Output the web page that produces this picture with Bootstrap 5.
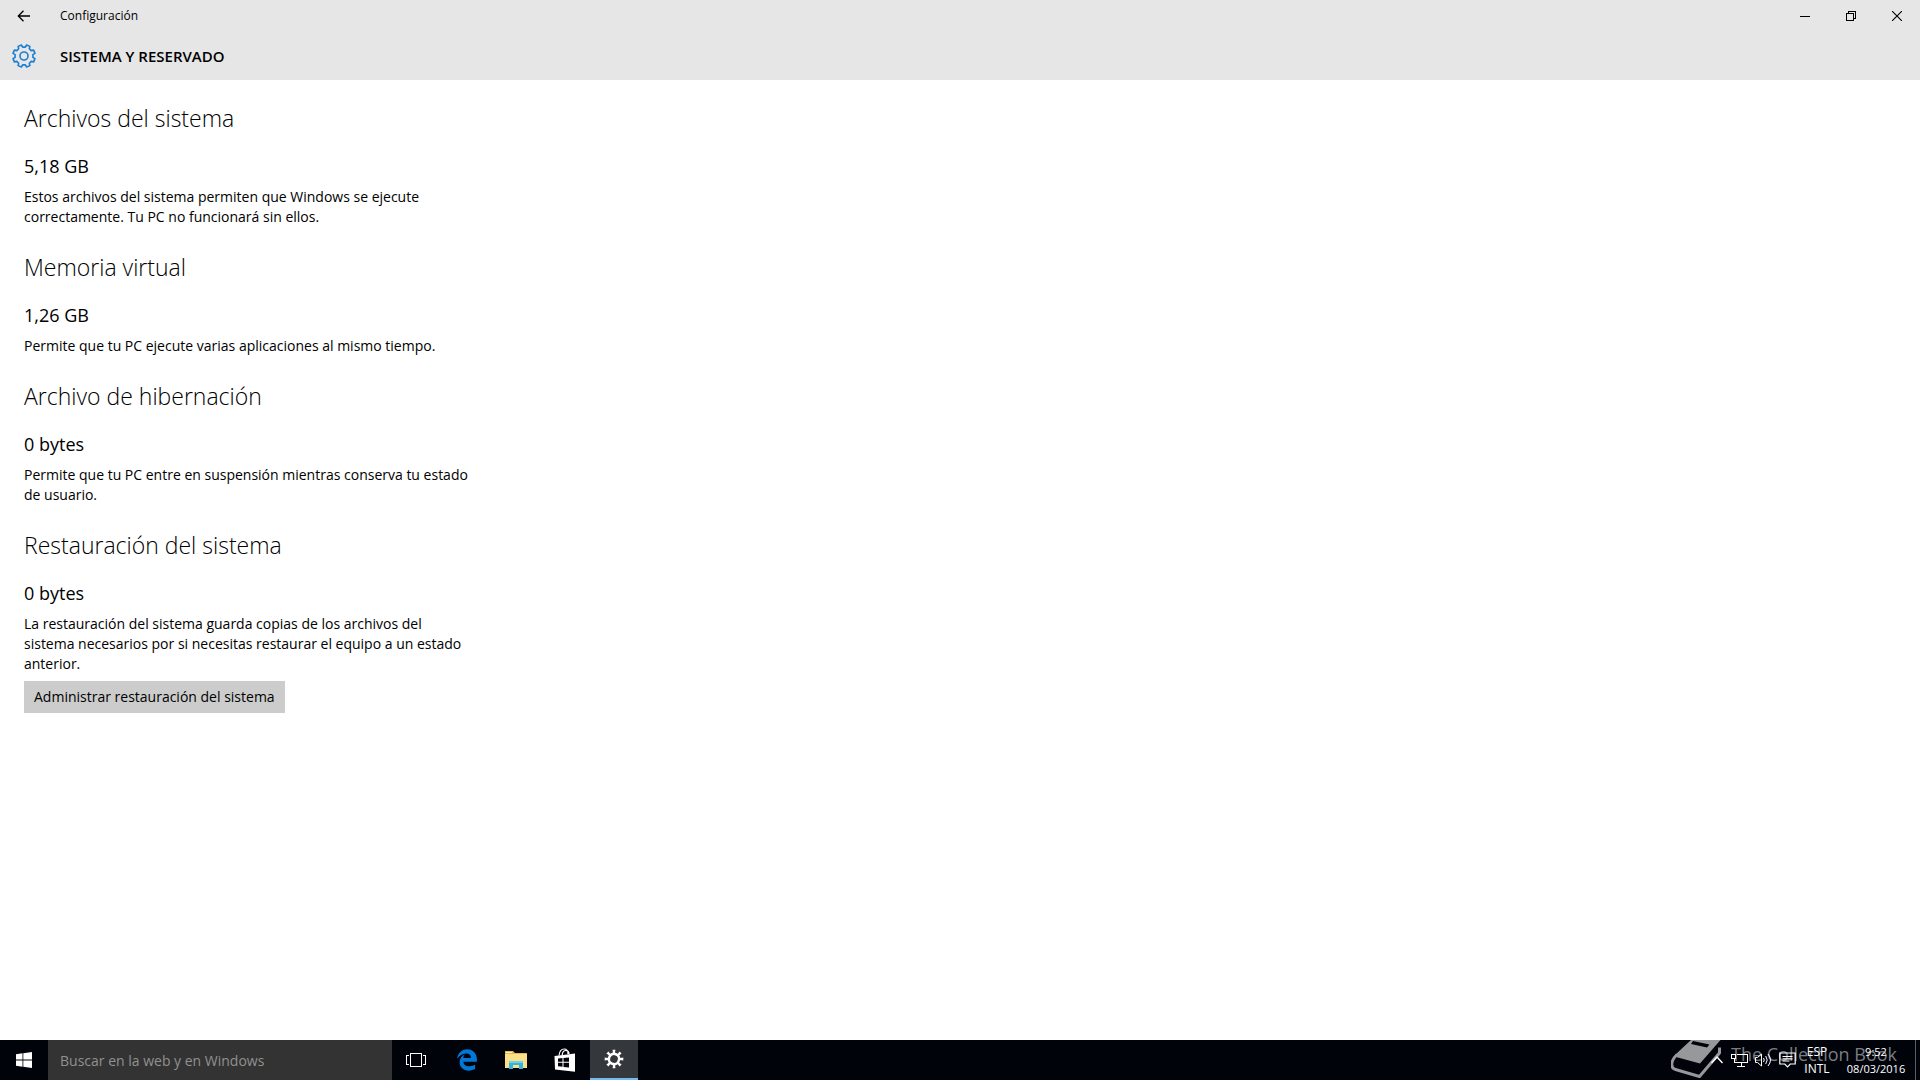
<!DOCTYPE html>
<html lang="es">
<head>
<meta charset="utf-8">
<meta name="viewport" content="width=device-width, initial-scale=1">
<title>Configuración</title>
<link href="https://cdn.jsdelivr.net/npm/bootstrap@5.3.0/dist/css/bootstrap.min.css" rel="stylesheet">
<style>
body { font-family: "Open Sans", "Noto Sans", sans-serif; font-size: 14px; line-height: 20px; color: #000; }
svg { display: block; }
.app-top { background: #e6e6e6; }
.title-bar { height: 32px; }
.title-name { font-size: 12px; line-height: 16px; }
.bar-btn { width: 48px; height: 32px; }
.win-btn { width: 46px; height: 32px; }
.page-head { height: 48px; }
.page-title { font-size: 15px; line-height: 24px; font-weight: 600; }
.settings { padding: 22px 24px; }
.settings section { max-width: 450px; margin-bottom: 24px; }
.settings h2 { font-size: 23px; line-height: 32px; font-weight: 300; margin-bottom: 20px; }
.amount { font-size: 18px; line-height: 24px; margin-bottom: 9px; }
.manage { height: 32px; margin-top: 7px; padding: 0 10px; background: #ccc; }
.taskbar { height: 40px; background: #00030a; color: #fff; }
.search-box { width: 344px; background: #333; color: #fff; padding: 2px 12px 0; font-size: 14px; }
.search-box::placeholder { color: #919191; opacity: 1; }
.task-btn { width: 48px; height: 40px; }
.task-view { margin-right: 2px; }
.apps { gap: 1px; }
.task-on { background: #34373c; border-bottom: 2px solid #76b9ed !important; }
.tray-icons { gap: 7px; }
.tray-text { font-size: 12px; line-height: 17px; color: #fff; }
.clock { width: 76px; font-size: 11px; }
.lang { width: 42px; }
.peek { width: 1px; height: 40px; margin: 0 4px 0 1px; background: #5a5d63; }
.stamp { right: 23px; top: 0; gap: 8px; color: #7b7d81; font-size: 18px; line-height: 28px; pointer-events: none; }
</style>
<script src="https://cdn.jsdelivr.net/npm/bootstrap@5.3.0/dist/js/bootstrap.bundle.min.js"></script>
</head>
<body class="d-flex flex-column min-vh-100 bg-white">
<header class="app-top">
  <div class="title-bar d-flex align-items-center">
    <button class="bar-btn border-0 bg-transparent p-0 d-flex align-items-center justify-content-center" aria-label="Atrás">
      <svg width="14" height="12" viewBox="0 0 14 12" fill="none" stroke="#000" stroke-width="1.3"><path d="M13 6H1.5M6.5 .8L1.3 6l5.2 5.2"/></svg>
    </button>
    <span class="title-name ms-2 ps-1 flex-grow-1">Configuración</span>
    <button class="win-btn border-0 bg-transparent p-0 d-flex align-items-center justify-content-center" aria-label="Minimizar">
      <svg width="10" height="10" viewBox="0 0 10 10" shape-rendering="crispEdges"><path d="M0 5h10v1H0z"/></svg>
    </button>
    <button class="win-btn border-0 bg-transparent p-0 d-flex align-items-center justify-content-center" aria-label="Restaurar">
      <svg width="10" height="10" viewBox="0 0 10 10" fill="none" stroke="#000" shape-rendering="crispEdges"><path d="M.5 2.5h7v7h-7zM2.500 2V.5h7v7H8"/></svg>
    </button>
    <button class="win-btn border-0 bg-transparent p-0 d-flex align-items-center justify-content-center" aria-label="Cerrar">
      <svg width="10" height="10" viewBox="0 0 10 10" stroke="#000" stroke-width="1.1"><path d="M0 0l10 10M10 0L0 10"/></svg>
    </button>
  </div>
  <div class="page-head d-flex align-items-start pt-2">
    <div class="bar-btn d-flex justify-content-center pt-1">
      <svg width="24" height="24" viewBox="-12 -12 24 24" fill="none" stroke="#1a7fd0" stroke-width="1.6" stroke-linejoin="round"><path d="M1.33-8.9L2.64-10.99 5.9-9.63 5.35-7.24 7.24-5.35 9.63-5.9 10.99-2.64 8.9-1.33V1.33L10.99 2.64 9.63 5.9 7.24 5.35 5.35 7.24 5.9 9.63 2.64 10.99 1.33 8.9H-1.33L-2.64 10.99-5.9 9.63-5.35 7.24-7.24 5.35-9.63 5.9-10.99 2.64-8.9 1.33V-1.33L-10.99-2.64-9.63-5.9-7.24-5.35-5.35-7.24-5.9-9.63-2.64-10.99-1.33-8.9z"/><circle r="4"/></svg>
    </div>
    <h1 class="page-title mb-0 ms-2 ps-1 pt-1">SISTEMA Y RESERVADO</h1>
  </div>
</header>

<main class="settings flex-grow-1">
  <section>
    <h2>Archivos del sistema</h2>
    <p class="amount">5,18 GB</p>
    <p class="mb-0">Estos archivos del sistema permiten que Windows se ejecute correctamente. Tu PC no funcionará sin ellos.</p>
  </section>
  <section>
    <h2>Memoria virtual</h2>
    <p class="amount">1,26 GB</p>
    <p class="mb-0">Permite que tu PC ejecute varias aplicaciones al mismo tiempo.</p>
  </section>
  <section>
    <h2>Archivo de hibernación</h2>
    <p class="amount">0 bytes</p>
    <p class="mb-0">Permite que tu PC entre en suspensión mientras conserva tu estado de usuario.</p>
  </section>
  <section>
    <h2>Restauración del sistema</h2>
    <p class="amount">0 bytes</p>
    <p class="mb-0">La restauración del sistema guarda copias de los archivos del sistema necesarios por si necesitas restaurar el equipo a un estado anterior.</p>
    <button class="manage border-0">Administrar restauración del sistema</button>
  </section>
</main>

<footer class="taskbar position-relative d-flex align-items-stretch">
  <button class="task-btn border-0 bg-transparent p-0 d-flex align-items-center justify-content-center" aria-label="Inicio">
    <svg width="16" height="16" viewBox="0 0 16 16" fill="#fff"><path d="M0 2.200L6.500 1.300V7.500H0zM7.300 1.200L16 0V7.500H7.300zM0 8.400H6.500V14.700L0 13.800zM7.300 8.400H16V16L7.300 14.800z"/></svg>
  </button>
  <input class="search-box border-0 rounded-0" type="text" placeholder="Buscar en la web y en Windows" aria-label="Buscar en la web y en Windows">
  <div class="apps d-flex">
    <button class="task-btn task-view border-0 bg-transparent p-0 d-flex align-items-center justify-content-center" aria-label="Vista de tareas">
      <svg width="20" height="14" viewBox="0 0 20 14" fill="none" stroke="#fff" shape-rendering="crispEdges"><path d="M4.500 .5h11v13h-11zM3 2.500H.5v9H3M17 2.500h2.500v9H17"/></svg>
    </button>
    <button class="task-btn border-0 bg-transparent p-0 d-flex align-items-center justify-content-center" aria-label="Microsoft Edge">
      <svg width="22" height="22" viewBox="14 0 484 512" fill="#0078d7"><path d="M486.286 243.671c0-44.032-7.754-84.465-28.801-122.405C416.498 47.879 343.912 8.001 258.893 8.001 118.962 7.724 40.617 113.214 26.056 227.679c42.429-61.312 117.073-121.376 220.375-124.966 0 0 109.666 0 99.419 104.957H169.997c6.369-37.386 18.554-58.986 34.339-78.926-75.048 34.893-121.85 96.096-120.742 188.315.83 71.448 50.124 144.836 120.743 171.976 83.357 31.847 192.776 7.2 240.132-21.324V363.307c-80.864 56.494-270.871 60.925-272.255-67.572H486.286z"/></svg>
    </button>
    <button class="task-btn border-0 bg-transparent p-0 d-flex align-items-center justify-content-center" aria-label="Explorador de archivos">
      <svg width="22" height="18" viewBox="0 0 22 18"><path d="M0 0h8l2 2h12v15H0z" fill="#e8b64a"/><path d="M1 1h6v1H1z" fill="#fff3c4"/><path d="M0 3h22v14H0z" fill="#fbe08a"/><path d="M4 10h14v8h-4v-4H8v4H4z" fill="#35b4dd"/><path d="M4 10h14v2H4z" fill="#6fd0ea"/></svg>
    </button>
    <button class="task-btn border-0 bg-transparent p-0 d-flex align-items-center justify-content-center" aria-label="Tienda">
      <svg width="22" height="24" viewBox="0 0 22 24"><path d="M5 7.500C5.500 3.500 7.500 1 10.200 1c2.500 0 3.800 2.200 3.800 5M8.200 7c.3-3 1.500-4.500 3.500-4.500S15 4 15 6" fill="none" stroke="#fff" stroke-width="1.200"/><path d="M.5 8L21 5.500V23.800L1 21.500z" fill="#fff"/><path d="M4 10.400l4.500-.4v3.800H4zM9.500 9.900l5.500-.5v4.400H9.500zM4 14.800h4.500v4L4 18.300zM9.500 14.800H15v4.700l-5.500-.6z" fill="#00030a"/></svg>
    </button>
    <button class="task-btn task-on border-0 p-0 d-flex align-items-center justify-content-center" aria-label="Configuración">
      <svg width="20" height="20" viewBox="-12 -12 24 24" fill="#fff" fill-rule="evenodd"><path transform="rotate(22.5)" d="M1.9-7.500L2.640-10.990 5.900-9.630 4.200-6.700 6.700-4.200 9.630-5.900 10.990-2.640 7.500-1.900V1.900L10.990 2.640 9.630 5.900 6.700 4.200 4.200 6.700 5.900 9.630 2.640 10.990 1.900 7.500H-1.900L-2.640 10.990-5.900 9.630-4.200 6.700-6.700 4.200-9.630 5.900-10.990 2.640-7.500 1.900V-1.900L-10.990-2.640-9.630-5.900-6.700-4.200-4.200-6.700-5.900-9.630-2.640-10.990-1.900-7.500zM-4.600 0a4.600 4.600 0 1 0 9.200 0a4.600 4.600 0 1 0-9.200 0z"/></svg>
    </button>
  </div>

  <div class="stamp position-absolute d-flex align-items-start">
    <svg width="52" height="40" viewBox="0 0 52 40"><path d="M20 0H49.500L29 23.500 5 17Q3 16 5 14z" fill="#97989b"/><path d="M22 1L38.500 4.500 36 7.500 20 4z" fill="#00030a"/><path d="M6 14.500C-.5 21-1 28 4.500 29.500L28.500 36.500 48.500 13V7.500" fill="none" stroke="#97989b" stroke-width="3" stroke-linejoin="round"/></svg>
    <span>The Collection Book</span>
  </div>

  <div class="position-relative ms-auto d-flex align-items-center">
    <div class="tray-icons d-flex align-items-center">
      <button class="border-0 bg-transparent p-0" aria-label="Mostrar iconos ocultos"><svg width="14" height="16" viewBox="0 0 14 16" fill="none" stroke="#fff" stroke-width="1.400"><path d="M1.500 11L7 5l5.500 6"/></svg></button>
      <button class="border-0 bg-transparent p-0" aria-label="Red"><svg width="17" height="14" viewBox="0 0 17 14" fill="none" stroke="#fff" shape-rendering="crispEdges"><path d="M6 1.500h10.500v8H3.500V6M.5 1.500h4v4h-4zM10.500 10v3M6 13.500h8"/></svg></button>
      <button class="border-0 bg-transparent p-0" aria-label="Volumen"><svg width="17" height="16" viewBox="0 0 17 16" fill="none" stroke="#fff"><path d="M.5 5.500h2l4-3.500v12l-4-3.500h-2zM8.500 6q1.500 2 0 4M10.700 4q3 4 0 8M13 2q5 6 0 12"/></svg></button>
      <button class="border-0 bg-transparent p-0" aria-label="Centro de actividades"><svg width="17" height="16" viewBox="0 0 17 16" fill="none" stroke="#fff" stroke-width="1.200"><path d="M.8 1h15.400v11h-5L8.500 14.800 5.800 12h-5zM3.500 4.500h10M3.500 6.800h10M3.500 9h7"/></svg></button>
    </div>
    <button class="tray-text lang border-0 bg-transparent p-0 text-center">ESP<br>INTL</button>
    <button class="tray-text clock border-0 bg-transparent p-0 text-center text-nowrap">9:52<br>08/03/2016</button>
    <span class="peek"></span>
  </div>
</footer>
</body>
</html>
